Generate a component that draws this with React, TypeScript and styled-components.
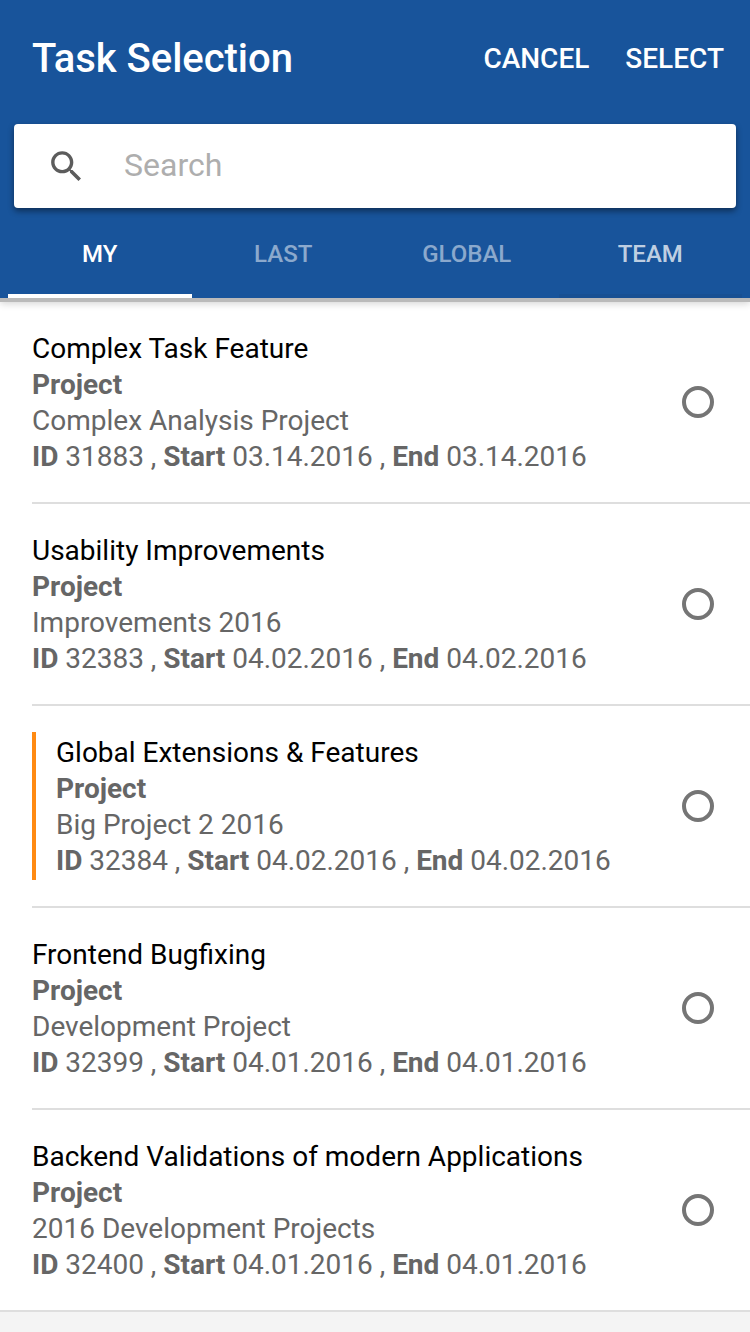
import React, { useState } from "react";
import styled, { createGlobalStyle } from "styled-components";

const GlobalStyle = createGlobalStyle`
  *, *::before, *::after { box-sizing: border-box; }
  body { margin: 0; background: #f4f4f4; font-family: Roboto, "Liberation Sans", sans-serif; }
`;

const Screen = styled.main`
  width: 750px;
  height: 1332px;
  overflow: hidden;
  background: #f4f4f4;
`;

const Header = styled.header`
  position: relative;
  display: flex;
  flex-direction: column;
  height: 302px;
  background: #18549b;
  color: #fff;
  border-bottom: 4px solid #bababa;
  box-shadow: 0 2px 7px rgba(0, 0, 0, 0.16);
`;

const TitleBar = styled.div`
  display: flex;
  align-items: center;
  height: 124px;
  padding: 0 26px 6px 32px;
`;

const Title = styled.h1`
  flex: 1;
  margin: 0;
  font-size: 40px;
  font-weight: 500;
  line-height: 48px;
  letter-spacing: -0.03px;
`;

const Action = styled.button`
  margin-left: 36px;
  padding: 0;
  border: 0;
  background: none;
  color: inherit;
  font: 500 28px/32px Roboto, sans-serif;
`;

const SearchBox = styled.label`
  display: flex;
  align-items: center;
  height: 84px;
  margin: 0 14px;
  padding-left: 32px;
  border-radius: 4px;
  background: #fff;
  box-shadow: 0 3px 6px rgba(0, 0, 0, 0.45);
`;

const SearchInput = styled.input`
  flex: 1;
  margin-left: 37px;
  padding: 0 0 2px;
  border: 0;
  outline: 0;
  background: none;
  font: 400 32px/38px Roboto, sans-serif;
  &::placeholder { color: #aeaeae; opacity: 1; }
`;

const Tabs = styled.nav`
  display: flex;
  flex: 1;
  padding: 0 8px;
`;

const Tab = styled.button<{ $active: boolean; $opacity: number; $underline?: string }>`
  flex: 1;
  padding: 6px 0 0;
  border: 0;
  border-bottom: 4px solid ${(p) => (p.$active ? "#fff" : p.$underline ?? "transparent")};
  background: none;
  color: rgba(255, 255, 255, ${(p) => p.$opacity});
  font: 500 24px/28px Roboto, sans-serif;
`;

const List = styled.ul`
  margin: 0;
  padding: 0;
  list-style: none;
  background: #fff;
  border-bottom: 2px solid #dedede;
`;

const Row = styled.li`
  display: flex;
  align-items: center;
  height: 202px;
  margin-left: 32px;
  padding-right: 36px;
  & + & { border-top: 2px solid #dedede; }
  &:first-child { height: 200px; }
`;

const Details = styled.div<{ $marked?: boolean }>`
  flex: 1;
  height: 148px;
  padding: 3px 0 1px ${(p) => (p.$marked ? "20px" : "0")};
  border-left: ${(p) => (p.$marked ? "4px solid #ff8a12" : "0")};
  font-size: 28px;
  line-height: 36px;
  color: #666;
`;

const TaskName = styled.div`
  color: #000;
`;

const Schedule = styled.div`
  letter-spacing: -0.015px;
`;

const Strong = styled.b`
  font-weight: 700;
`;

const Radio = styled.button`
  width: 32px;
  height: 32px;
  padding: 0;
  border: 4px solid #757575;
  border-radius: 50%;
  background: #fff;
`;

const tabs = [
  { label: "MY", opacity: 1 },
  { label: "LAST", opacity: 0.5 },
  { label: "GLOBAL", opacity: 0.5 },
  { label: "TEAM", opacity: 0.74, underline: "#185093" },
];

const tasks = [
  { name: "Complex Task Feature", project: "Complex Analysis Project", id: 31883, date: "03.14.2016" },
  { name: "Usability Improvements", project: "Improvements 2016", id: 32383, date: "04.02.2016" },
  { name: "Global Extensions & Features", project: "Big Project 2 2016", id: 32384, date: "04.02.2016", marked: true },
  { name: "Frontend Bugfixing", project: "Development Project", id: 32399, date: "04.01.2016" },
  { name: "Backend Validations of modern Applications", project: "2016 Development Projects", id: 32400, date: "04.01.2016" },
];

function SearchIcon() {
  return (
    <svg width="41" height="41" viewBox="0 0 24 24" fill="#5c5c5c" aria-hidden="true">
      <path d="M15.5 14h-.79l-.28-.27C15.41 12.59 16 11.11 16 9.5 16 5.91 13.09 3 9.5 3S3 5.91 3 9.5 5.91 16 9.5 16c1.61 0 3.09-.59 4.23-1.57l.27.28v.79l5 4.99L20.49 19l-4.99-5zm-6 0C7.01 14 5 11.99 5 9.5S7.01 5 9.5 5 14 7.01 14 9.5 11.99 14 9.5 14z" />
    </svg>
  );
}

export default function App() {
  const [active, setActive] = useState("MY");
  return (
    <Screen>
      <GlobalStyle />
      <Header>
        <TitleBar>
          <Title>Task Selection</Title>
          <Action>CANCEL</Action>
          <Action>SELECT</Action>
        </TitleBar>
        <SearchBox>
          <SearchIcon />
          <SearchInput placeholder="Search" />
        </SearchBox>
        <Tabs>
          {tabs.map((t) => (
            <Tab
              key={t.label}
              $active={t.label === active}
              $opacity={t.opacity}
              $underline={t.underline}
              onClick={() => setActive(t.label)}
            >
              {t.label}
            </Tab>
          ))}
        </Tabs>
      </Header>
      <List>
        {tasks.map((t) => (
          <Row key={t.id}>
            <Details $marked={t.marked}>
              <TaskName>{t.name}</TaskName>
              <div><Strong>Project</Strong></div>
              <div>{t.project}</div>
              <Schedule>
                <Strong>ID</Strong> {t.id} , <Strong>Start</Strong> {t.date} , <Strong>End</Strong> {t.date}
              </Schedule>
            </Details>
            <Radio aria-label={t.name} />
          </Row>
        ))}
      </List>
    </Screen>
  );
}
